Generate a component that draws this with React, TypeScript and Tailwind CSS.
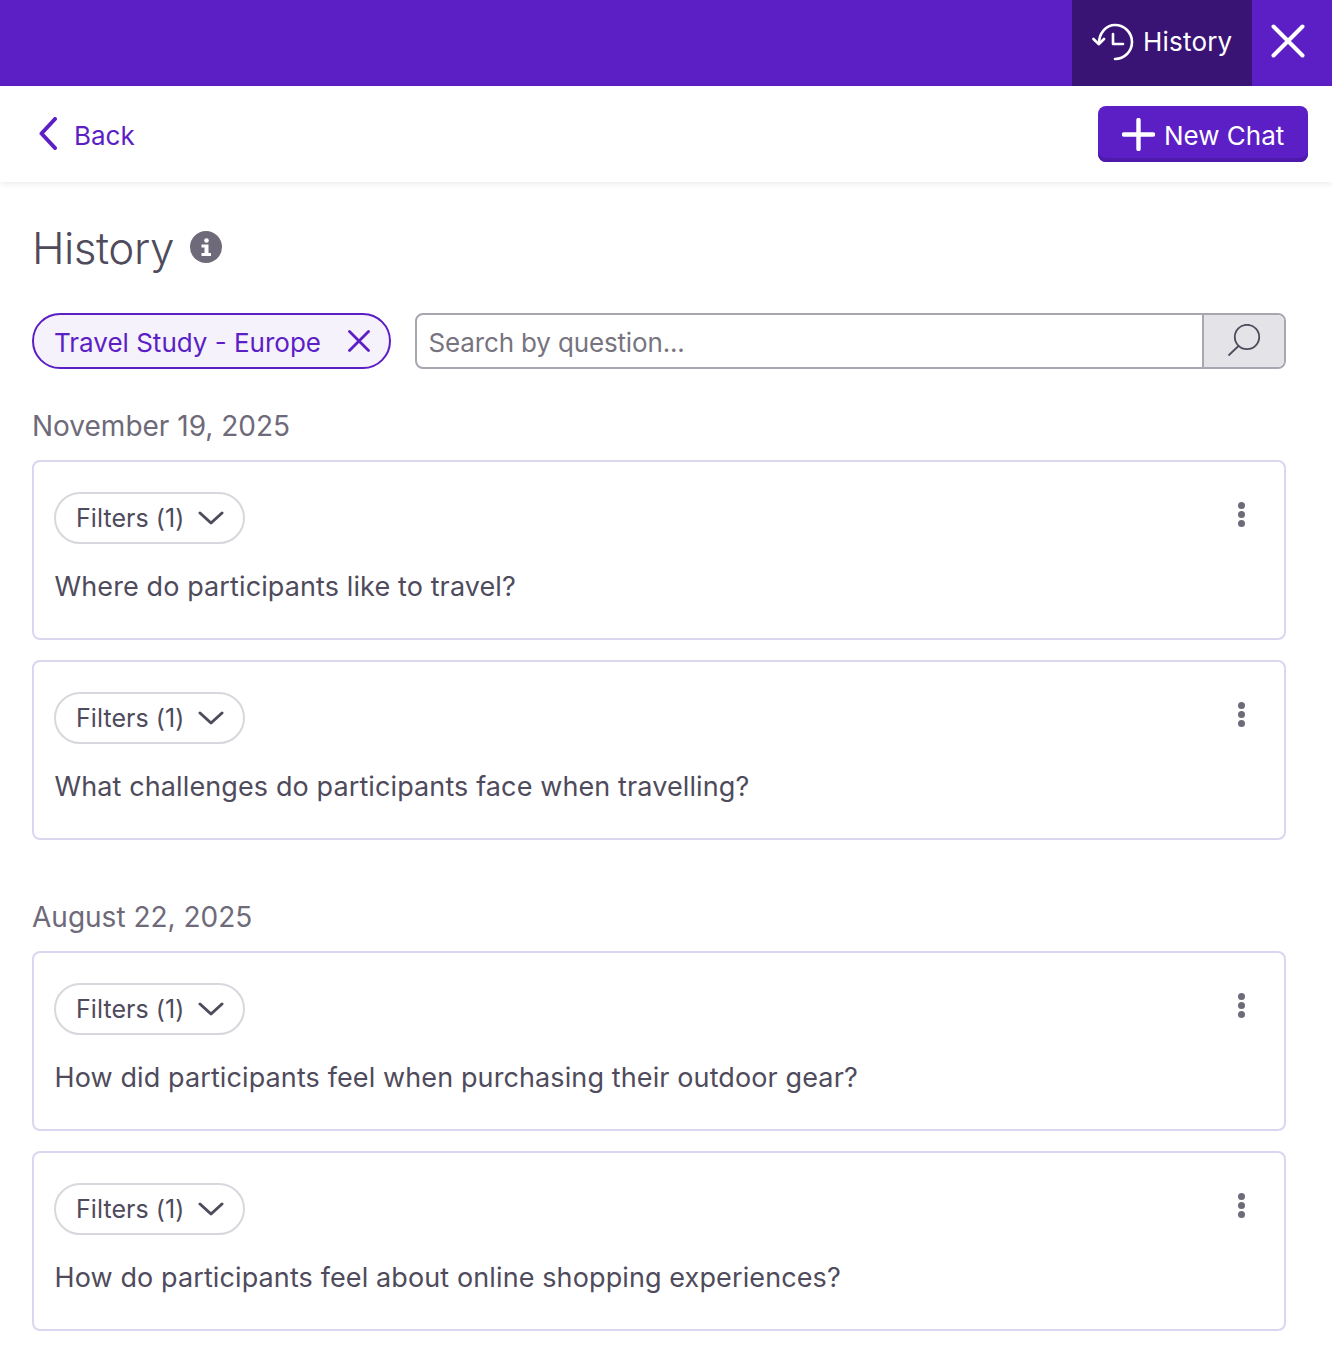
const groups = [
  {
    date: "November 19, 2025",
    questions: ["Where do participants like to travel?", "What challenges do participants face when travelling?"],
  },
  {
    date: "August 22, 2025",
    questions: ["How did participants feel when purchasing their outdoor gear?", "How do participants feel about online shopping experiences?"],
  },
];

function QuestionCard({ question }: { question: string }) {
  return (
    <div className="h-[180px] rounded-lg border-2 border-[#dcd5f0] bg-white pl-[20px] pr-[39px] pt-[30px]">
      <div className="flex items-start justify-between">
        <button className="flex h-[52px] w-[191px] items-center rounded-full border-2 border-[#d8d7dd] pl-[20px] text-[25px] tracking-[0.06px] text-[#4f4b5c]">
          <span className="mt-[2px]">Filters (1)</span>
          <svg width="26" height="14" viewBox="0 0 26 14" fill="none" stroke="#4f4b5c" strokeWidth="3" strokeLinecap="round" strokeLinejoin="round" className="ml-[14px]">
            <path d="M2 2l11 10L24 2" />
          </svg>
        </button>
        <div className="mt-[10px] flex flex-col gap-[2px]">
          <span className="h-[7px] w-[7px] rounded-full bg-[#6e6a79]" />
          <span className="h-[7px] w-[7px] rounded-full bg-[#6e6a79]" />
          <span className="h-[7px] w-[7px] rounded-full bg-[#6e6a79]" />
        </div>
      </div>
      <p className="ml-[0.5px] mt-[23px] text-[27px] leading-[40px] tracking-[0.11px] text-[#4f4b5c]">{question}</p>
    </div>
  );
}

export default function App() {
  return (
    <div className="h-[1368px] w-[1332px] overflow-hidden bg-white font-['Inter',sans-serif]">
      <header className="flex h-[86px] justify-end bg-[#5c1ec5] text-white">
        <div className="flex w-[180px] items-center gap-[9px] bg-[#3a1475] pl-[20px]">
          <svg width="42" height="42" viewBox="0 0 42 42" fill="none" stroke="currentColor" strokeWidth="2.6" strokeLinecap="round" strokeLinejoin="round" className="mb-[2px]">
            <path d="M7 22.5C7 12 14 4 23 4a17 17 0 0 1 0 34" />
            <path d="M1.5 18l5.2 5.2L12 18" />
            <path d="M21 13v10h10" />
          </svg>
          <span className="mb-[4px] text-[26px] tracking-[0.2px]">History</span>
        </div>
        <button className="flex w-[80px] items-center justify-center pr-[8px] pb-[5px]">
          <svg width="34" height="34" viewBox="0 0 34 34" fill="none" stroke="currentColor" strokeWidth="4" strokeLinecap="round">
            <path d="M2.5 2.5l29 29M31.5 2.5l-29 29" />
          </svg>
        </button>
      </header>

      <div className="flex h-[96px] items-center justify-between pl-[39px] pr-[24px] shadow-[0_2px_6px_rgba(0,0,0,0.08)]">
        <a className="flex items-center gap-[17px] text-[26px] text-[#5c1ec5]">
          <svg width="18" height="33" viewBox="0 0 18 33" fill="none" stroke="currentColor" strokeWidth="4" strokeLinecap="round" strokeLinejoin="round" className="mb-[1px]">
            <path d="M16 2L2.5 16.5 16 31" />
          </svg>
          <span className="mt-[2px]">Back</span>
        </a>
        <button className="flex h-[56px] w-[210px] items-center gap-[9px] rounded-lg bg-[#5c1ec5] pl-[24px] text-[26px] text-white shadow-[inset_0_-4px_0_#4f1aab]">
          <svg width="33" height="33" viewBox="0 0 33 33" fill="none" stroke="currentColor" strokeWidth="4.4" strokeLinecap="round" className="mt-[1px]">
            <path d="M16.5 2v29M2 16.5h29" />
          </svg>
          <span className="mt-[2px]">New Chat</span>
        </button>
      </div>

      <main className="pl-[32px] pr-[46px]">
        <div className="mt-[36px] flex h-[60px] items-center gap-[16px]">
          <h1 className="text-[44px] font-[350] leading-[60px] tracking-[-0.5px] text-[#4f4b5c]">History</h1>
          <svg width="32" height="32" viewBox="0 0 32 32" className="mb-[2px]">
            <circle cx="16" cy="16" r="16" fill="#6e6a79" />
            <circle cx="16.5" cy="9.5" r="2.3" fill="#fff" />
            <path d="M11.5 13.5H18.5V22H21V25H11.5V22H14.5V16.5H11.5Z" fill="#fff" />
          </svg>
        </div>

        <div className="mt-[35px] flex h-[56px] gap-[24px]">
          <div className="flex w-[359px] items-center justify-between rounded-full border-2 border-[#5c1ec5] bg-[#f5f2fb] pl-[20px] pr-[19px] text-[26px] text-[#5c1ec5]">
            <span className="mt-[2px]">Travel Study - Europe</span>
            <svg width="22" height="22" viewBox="0 0 22 22" fill="none" stroke="currentColor" strokeWidth="2.8" strokeLinecap="round">
              <path d="M1.5 1.5l19 19M20.5 1.5l-19 19" />
            </svg>
          </div>
          <div className="flex flex-1 overflow-hidden rounded-lg border-2 border-[#a8a6b0]">
            <input
              placeholder="Search by question..."
              className="min-w-0 flex-1 pl-[11.5px] pt-[2px] text-[26px] tracking-[-0.15px] text-[#4f4b5c] outline-none placeholder:text-[#77747f]"
            />
            <div className="flex w-[82px] items-center justify-center border-l-2 border-[#a8a6b0] bg-[#e4e3e8] text-[#4f4b5c]">
              <svg width="34" height="34" viewBox="0 0 34 34" fill="none" stroke="currentColor" strokeWidth="1.8" strokeLinecap="round">
                <circle cx="20" cy="13" r="12.2" />
                <path d="M11.5 22L2 31" />
              </svg>
            </div>
          </div>
        </div>

        {groups.map((group, i) => (
          <section key={group.date} className={i === 0 ? "mt-[37px]" : "mt-[57px]"}>
            <h2 className="text-[28px] leading-[40px] text-[#6e6a79]">{group.date}</h2>
            <div className="mt-[14px] flex flex-col gap-[20px]">
              {group.questions.map((question) => (
                <QuestionCard key={question} question={question} />
              ))}
            </div>
          </section>
        ))}
      </main>
    </div>
  );
}
